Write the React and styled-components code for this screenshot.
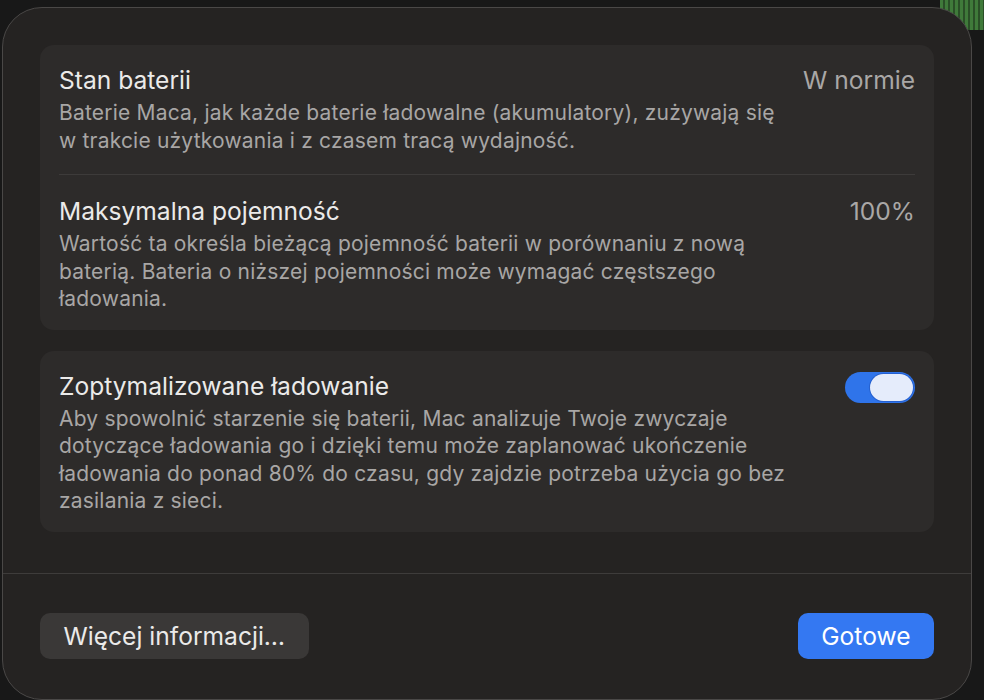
import React, { useState } from 'react';
import styled, { createGlobalStyle } from 'styled-components';

const GlobalStyle = createGlobalStyle`
    html, body {
        margin: 0;
        padding: 0;
        background-color: #181818;
        background-image: repeating-linear-gradient(90deg, #3f7a3a 0 3px, #2a4f27 3px 5px);
        background-size: 44px 30px;
        background-position: top right;
        background-repeat: no-repeat;
    }
    body {
        font-family: Inter, "Noto Sans", "Liberation Sans", sans-serif;
        -webkit-font-smoothing: antialiased;
    }
    * { box-sizing: border-box; }
`;

const Screen = styled.div`
    width: 984px;
    height: 700px;
    padding: 7px 12px 0 2px;
    overflow: hidden;
`;

const Window = styled.div`
    width: 970px;
    height: 693px;
    background: #252322;
    border: 1px solid #4a4847;
    border-radius: 40px;
    display: flex;
    flex-direction: column;
`;

const Content = styled.div`
    display: flex;
    flex-direction: column;
    gap: 21px;
    padding: 37px 37px 41px;
`;

const Card = styled.div`
    background: #2d2b2a;
    border-radius: 14px;
    padding: 0 19px;
    display: flex;
    flex-direction: column;
`;

const Row = styled.div`
    display: flex;
    justify-content: space-between;
    align-items: flex-start;
    gap: 24px;
    padding: ${p => p.$pad || '20px 0 20px'};
    border-top: ${p => (p.$divider ? '1px solid #3d3b3a' : 'none')};
`;

const TextBlock = styled.div`
    display: flex;
    flex-direction: column;
    gap: 4px;
    max-width: 740px;
`;

const Title = styled.div`
    font-size: 24.6px;
    line-height: 30px;
    color: #ebeae9;
`;

const Description = styled.div`
    font-size: 21px;
    line-height: 27.5px;
    letter-spacing: 0.2px;
    color: #a8a6a5;
`;

const Value = styled.div`
    font-size: 24.6px;
    line-height: 30px;
    color: #a9a7a6;
    white-space: nowrap;
`;

const Toggle = styled.button`
    width: 70px;
    height: 31px;
    border: none;
    border-radius: 16px;
    background: ${p => (p.$on ? '#2f74ea' : '#4a4847')};
    padding: 2px;
    margin-top: 1px;
    display: flex;
    justify-content: ${p => (p.$on ? 'flex-end' : 'flex-start')};
    cursor: pointer;
    flex-shrink: 0;
`;

const Knob = styled.span`
    width: 43px;
    height: 27px;
    border-radius: 14px;
    background: #e5ecfb;
    box-shadow: 0 0 0 1px rgba(20, 60, 160, 0.35);
`;

const Separator = styled.div`
    height: 1px;
    background: #3e3c3b;
`;

const Footer = styled.div`
    display: flex;
    justify-content: space-between;
    padding: 39px 37px 0;
`;

const Button = styled.button`
    height: 46px;
    padding: 0 23.5px;
    border: none;
    border-radius: 10px;
    font-family: inherit;
    font-size: 24.6px;
    color: ${p => (p.$primary ? '#ffffff' : '#ebeae9')};
    background: ${p => (p.$primary ? '#3478f2' : '#3a3837')};
    cursor: pointer;
`;

function App() {
    const [optimized, setOptimized] = useState(true);

    return (
        <Screen>
            <GlobalStyle />
            <Window>
                <Content>
                    <Card>
                        <Row>
                            <TextBlock>
                                <Title>Stan baterii</Title>
                                <Description>
                                    Baterie Maca, jak każde baterie ładowalne (akumulatory), zużywają się w trakcie użytkowania i z czasem tracą wydajność.
                                </Description>
                            </TextBlock>
                            <Value>W normie</Value>
                        </Row>
                        <Row $divider $pad="21px 0 17px">
                            <TextBlock>
                                <Title>Maksymalna pojemność</Title>
                                <Description>
                                    Wartość ta określa bieżącą pojemność baterii w porównaniu z nową baterią. Bateria o niższej pojemności może wymagać częstszego ładowania.
                                </Description>
                            </TextBlock>
                            <Value>100%</Value>
                        </Row>
                    </Card>
                    <Card>
                        <Row $pad="20px 0 17px">
                            <TextBlock>
                                <Title>Zoptymalizowane ładowanie</Title>
                                <Description>
                                    Aby spowolnić starzenie się baterii, Mac analizuje Twoje zwyczaje dotyczące ładowania go i dzięki temu może zaplanować ukończenie ładowania do ponad 80% do czasu, gdy zajdzie potrzeba użycia go bez zasilania z sieci.
                                </Description>
                            </TextBlock>
                            <Toggle $on={optimized} onClick={() => setOptimized(!optimized)}>
                                <Knob />
                            </Toggle>
                        </Row>
                    </Card>
                </Content>
                <Separator />
                <Footer>
                    <Button>Więcej informacji…</Button>
                    <Button $primary>Gotowe</Button>
                </Footer>
            </Window>
        </Screen>
    );
}

export default App;
